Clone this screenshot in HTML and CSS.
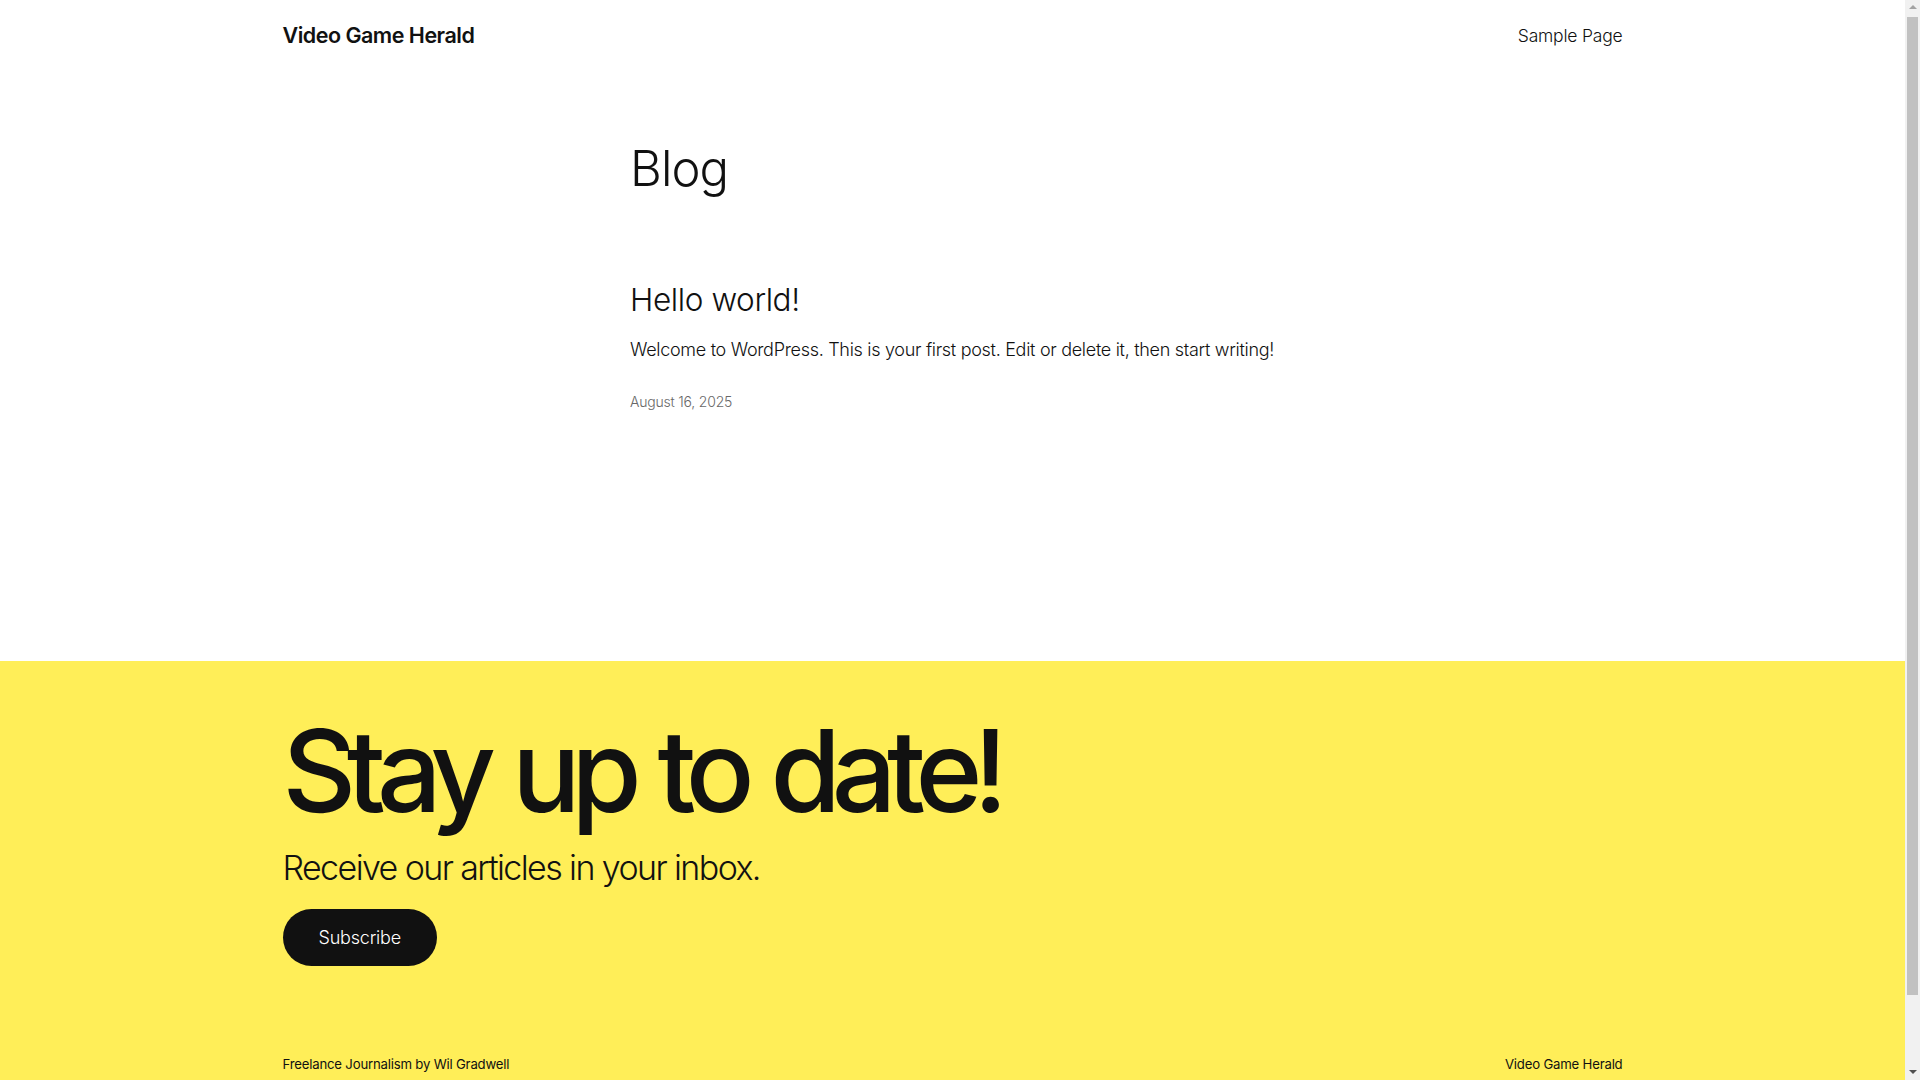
FILE: index.html
```html
<!DOCTYPE html>
<html lang="en">
<head>
<meta charset="utf-8">
<title>Video Game Herald</title>
<link rel="stylesheet" href="styles.css">
</head>
<body>
<header class="site-header">
  <div class="wide header-row">
    <a class="site-title" href="#">Video Game Herald</a>
    <nav class="nav"><a href="#">Sample Page</a></nav>
  </div>
</header>
<main class="main">
  <div class="content">
    <h1 class="page-title">Blog</h1>
    <article class="post">
      <h2 class="post-title"><a href="#">Hello world!</a></h2>
      <p class="excerpt">Welcome to WordPress. This is your first post. Edit or delete it, then start writing!</p>
      <p class="post-date">August 16, 2025</p>
    </article>
  </div>
</main>
<section class="newsletter">
  <div class="wide">
    <h2 class="cta-title">Stay up to date!</h2>
    <p class="cta-sub">Receive our articles in your inbox.</p>
    <a class="btn" href="#">Subscribe</a>
  </div>
  <footer class="wide footer-row">
    <p class="credit">Freelance Journalism by Wil Gradwell</p>
    <p class="credit"><a href="#">Video Game Herald</a></p>
  </footer>
</section>
<div class="scrollbar" aria-hidden="true">
  <span class="sb-arrow sb-up"></span>
  <span class="sb-thumb"></span>
  <span class="sb-arrow sb-down"></span>
</div>
</body>
</html>
```
FILE: styles.css
```css
html, body { margin: 0; padding: 0; }
body {
  margin-right: 15px;
  font-family: Inter, "Noto Sans", sans-serif;
  color: #111111;
  background: #ffffff;
  -webkit-font-smoothing: antialiased;
}
a { color: inherit; text-decoration: none; }
p, h1, h2 { margin: 0; }

.wide { width: 1340px; margin: 0 auto; }
.content { width: 645px; margin: 0 auto; }

.header-row {
  height: 70px;
  display: flex;
  align-items: center;
  justify-content: space-between;
}
.site-title {
  font-size: 21.5px;
  font-weight: 600;
  letter-spacing: -0.5px;
}
.nav a {
  font-size: 17.5px;
  font-weight: 300;
  letter-spacing: -0.2px;
}

.main { padding-top: 70px; padding-bottom: 250px; }
.page-title {
  font-size: 49px;
  font-weight: 300;
  line-height: 1.2;
  letter-spacing: -0.9px;
}
.post { padding-top: 82px; }
.post-title {
  font-size: 31.5px;
  font-weight: 300;
  line-height: 1.2;
  letter-spacing: -0.4px;
}
.excerpt {
  margin-top: 17px;
  font-size: 18px;
  font-weight: 300;
  line-height: 1.5;
  letter-spacing: -0.3px;
}
.post-date {
  margin-top: 29px;
  font-size: 14px;
  font-weight: 300;
  line-height: 1.4;
  color: #686868;
  letter-spacing: -0.2px;
}

.newsletter {
  background: #ffee58;
  padding-top: 53px;
  padding-bottom: 140px;
}
.cta-title {
  font-size: 114px;
  font-weight: 500;
  line-height: 1;
  letter-spacing: -9.3px;
  word-spacing: 4px;
}
.cta-sub {
  margin-top: 20px;
  font-size: 34px;
  font-weight: 300;
  line-height: 1.2;
  letter-spacing: -1.6px;
}
.btn {
  display: inline-flex;
  align-items: center;
  justify-content: center;
  margin-top: 20px;
  height: 57px;
  padding: 0 36px;
  border-radius: 999px;
  background: #111111;
  color: #ffffff;
  font-size: 18px;
  font-weight: 300;
  letter-spacing: -0.2px;
}
.footer-row {
  margin-top: 89px;
  display: flex;
  justify-content: space-between;
}
.credit {
  font-size: 13.2px;
  font-weight: 400;
  line-height: 1.4;
  letter-spacing: -0.2px;
}

/* simulated browser scrollbar */
.scrollbar {
  position: fixed;
  top: 0;
  right: 0;
  bottom: 0;
  width: 15px;
  background: #f1f1f1;
  display: flex;
  flex-direction: column;
  align-items: center;
}
.sb-arrow {
  flex: 0 0 15px;
  width: 0;
  height: 0;
  border-left: 4px solid transparent;
  border-right: 4px solid transparent;
}
.sb-up {
  border-bottom: 4px solid #a3a3a3;
  margin-top: 5px;
  flex-basis: 0;
  margin-bottom: 6px;
}
.sb-down {
  border-top: 4px solid #505050;
  flex-basis: 0;
  margin-top: 5px;
  margin-bottom: 6px;
}
.sb-thumb {
  flex: 1;
  width: 11px;
  margin: 2px 0 70px;
  background: #c1c1c1;
  border-radius: 0;
}
```
